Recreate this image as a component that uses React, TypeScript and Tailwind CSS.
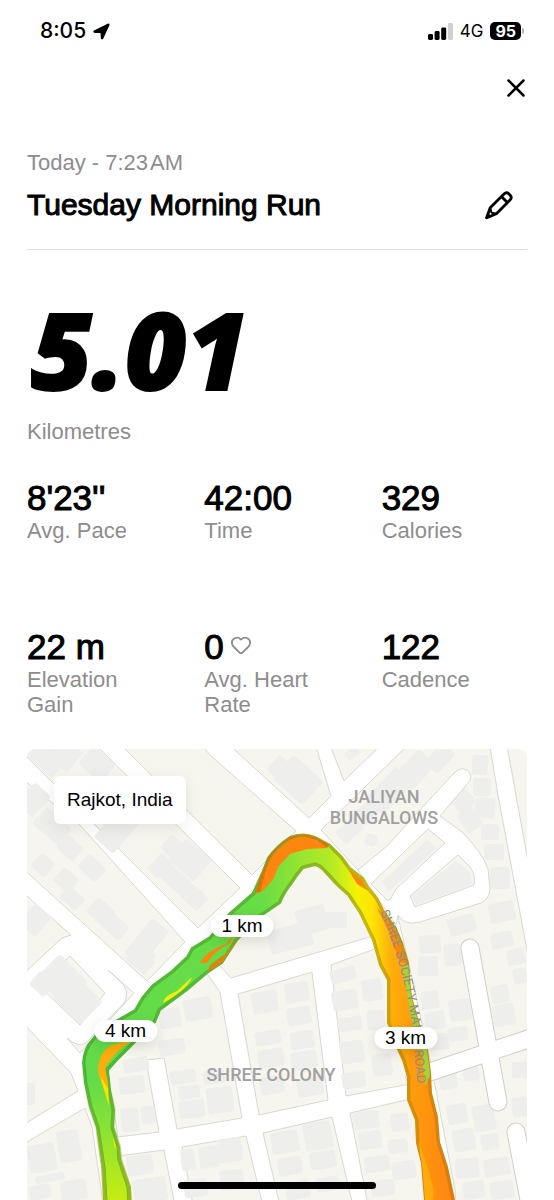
import { Heart, X } from 'lucide-react'

interface Stat {
  value: string
  label: string
  heart?: boolean
}

const stats: Stat[] = [
  { value: "8'23''", label: 'Avg. Pace' },
  { value: '42:00', label: 'Time' },
  { value: '329', label: 'Calories' },
  { value: '22 m', label: 'Elevation Gain' },
  { value: '0', label: 'Avg. Heart Rate', heart: true },
  { value: '122', label: 'Cadence' },
]

// city blocks, everything between them is road
const blocks = [
  '20,740 91,740 240,888 198,928 95,825 20,750',
  '116,740 198,740 210,755 296,831 252,875',
  '224,740 309,818 331,796 314,740',
  '328,740 344,781 386,740',
  '413,740 321,830 358,870 371,884 388,901 398,917 408,960 430,1060 455,1190 456,1210 540,1210 540,1010 527,950 498,795 489,740',
  '506,740 540,740 540,920 527,856',
  '20,777 80,825 185,942 147,981 20,866',
  '20,890 71,935 62,938 20,977',
  '70,956 105,993 80,1025 38,985',
  '20,1020 71,1073 78,1091 20,1127',
  '20,1146 85,1108 92,1127 104,1210 20,1210',
  '205,950 231,978 380,934 350,880 315,860 290,870 250,915',
  '200,970 208,975 220,992 242,1118 177,1129 164,1058 146,1060 159,1132 118,1137 105,1060 120,1030 160,985',
  '238,994 312,972 328,1100 259,1115',
  '331,965 388,944 410,1084 346,1096',
  '118,1156 164,1150 176,1210 128,1210',
  '182,1147 246,1136 264,1210 194,1210',
  '263,1133 332,1117 354,1210 281,1210',
  '350,1113 410,1099 440,1210 369,1210',
]

// cx, cy, width, height, rotation
const houses: [number, number, number, number, number][] = [
  [47, 758, 34, 24, 42], [66, 755, 24, 26, 42], [97, 764, 30, 24, 42], [122, 822, 28, 30, 42], [110, 838, 26, 20, 42],
  [174, 848, 22, 18, 42], [190, 860, 34, 28, 42], [160, 866, 16, 22, 42], [176, 880, 28, 18, 42], [194, 897, 24, 18, 42],
  [34, 800, 22, 28, 42], [52, 826, 34, 22, 42], [70, 848, 22, 18, 42], [92, 868, 24, 18, 42], [43, 865, 18, 18, 42],
  [66, 880, 20, 18, 42], [72, 898, 22, 16, 42], [101, 912, 24, 20, 42], [116, 927, 22, 18, 42], [150, 938, 34, 22, -50], [140, 954, 26, 20, 42],
  [35, 920, 22, 26, 42], [282, 770, 24, 20, 42], [298, 780, 40, 32, 42], [352, 753, 14, 10, -42],
  [390, 790, 42, 24, -46], [415, 770, 36, 24, -46], [440, 758, 28, 18, -46], [350, 830, 26, 16, -42], [371, 840, 12, 12, 20],
  [372, 808, 34, 18, -44], [480, 765, 16, 20, 3], [482, 787, 18, 18, 3], [485, 808, 20, 20, 4], [462, 800, 22, 20, 45], [470, 820, 18, 22, -35],
  [490, 832, 18, 16, 0], [494, 852, 20, 16, 0], [500, 878, 20, 22, 0], [502, 912, 26, 20, -12], [462, 925, 28, 18, -15], [430, 944, 22, 18, -5],
  [502, 940, 22, 16, -12], [453, 955, 18, 22, -5], [516, 957, 18, 16, -12], [428, 966, 20, 20, 0],
  [290, 938, 44, 24, -14], [312, 920, 30, 26, -14], [336, 920, 22, 16, 0],
  [42, 984, 20, 18, 42], [62, 980, 40, 34, 45], [78, 1000, 38, 32, 45], [140, 960, 26, 18, 42],
  [170, 1018, 22, 20, -10], [198, 1009, 28, 22, -10], [172, 1047, 26, 16, -10], [136, 1065, 26, 14, -10], [132, 1085, 26, 18, -8],
  [183, 1077, 26, 14, -8], [189, 1092, 22, 14, -8], [192, 1109, 26, 18, -8], [220, 1100, 26, 26, -8], [214, 1077, 22, 14, -8],
  [130, 1120, 18, 24, -5], [148, 1115, 14, 18, -5], [28, 1094, 14, 22, 0],
  [42, 1158, 28, 28, -10], [69, 1146, 22, 32, -10], [50, 1178, 30, 8, -10], [40, 1192, 22, 14, -10], [74, 1190, 26, 20, -8],
  [265, 1002, 26, 22, -10], [297, 992, 24, 20, -10], [268, 1038, 26, 14, -10], [299, 1016, 24, 18, -10], [271, 1058, 26, 18, -10],
  [302, 1040, 24, 18, -10], [272, 1085, 24, 18, -10], [304, 1060, 26, 18, -10], [310, 1087, 26, 18, -10],
  [343, 975, 26, 14, -14], [345, 1000, 26, 20, -10], [372, 990, 20, 22, -10], [350, 1024, 24, 14, -8], [352, 1052, 24, 22, -8], [376, 1020, 18, 20, -8],
  [354, 1080, 24, 16, -8], [382, 1065, 20, 22, -8], [430, 1000, 18, 18, -5], [435, 1020, 20, 18, -8], [460, 1010, 22, 22, -8], [438, 1042, 22, 16, -8],
  [458, 1034, 20, 14, -8], [500, 994, 18, 18, -10], [504, 1015, 22, 22, -10], [520, 976, 14, 16, -10],
  [140, 1165, 26, 20, -8], [150, 1190, 34, 24, -8], [188, 1160, 14, 22, -8], [209, 1157, 20, 22, -8], [230, 1150, 24, 24, -8], [196, 1188, 24, 18, -8], [232, 1180, 24, 20, -8],
  [285, 1142, 28, 22, -10], [318, 1136, 28, 28, -10], [290, 1166, 24, 18, -10], [323, 1160, 26, 18, -10], [298, 1190, 24, 18, -10], [328, 1184, 24, 14, -10],
  [366, 1120, 26, 18, -8], [400, 1122, 18, 18, -8], [370, 1140, 24, 18, -8], [398, 1146, 20, 14, -8], [377, 1164, 26, 16, -8], [404, 1170, 24, 18, -8], [383, 1188, 24, 16, -8],
  [448, 1078, 18, 22, -10], [471, 1072, 16, 18, -10], [457, 1114, 20, 20, -10], [484, 1118, 22, 26, -10], [464, 1140, 22, 22, -10], [490, 1142, 18, 16, -10],
  [467, 1168, 24, 20, -5], [497, 1167, 26, 18, -10], [474, 1190, 22, 18, -8], [502, 1190, 24, 18, -8], [520, 1107, 16, 20, -8], [520, 1070, 16, 16, 0],
]

const routeOutline =
  'M105,1206 L105,1200 103,1167 100,1147 97,1127 90,1107 85,1083 83,1063 Q84,1048 92,1040 L100,1030 135,1010 142,998 153,985 172,971 187,957 192,948 210,937 230,913 253,893 262,873 268,858 Q276,846 290,837 Q303,832 315,837 L330,845 342,857 350,868 363,878 368,887 377,898 383,910 395,927 402,943 408,963 409,977 411,997 417,1018 427,1050 430,1073 431,1093 437,1117 439,1142 447,1167 454,1200 456,1206 425,1206 425,1200 422,1163 417,1143 416,1120 408,1100 408,1077 403,1060 397,1047 388,1023 388,980 380,965 373,940 360,913 348,895 337,885 325,872 Q320,866 315,865 L303,868 Q296,876 292,883 Q284,893 280,903 L258,918 237,940 222,963 207,973 187,990 160,1010 155,1022 137,1040 117,1060 108,1070 110,1090 114,1110 113,1127 119,1147 120,1160 129,1187 130,1206 Z'

const markers = [
  { label: '1 km', place: 'left-[43%] top-[39.2%]' },
  { label: '4 km', place: 'left-[19.7%] top-[62.5%]' },
  { label: '3 km', place: 'left-[75.7%] top-[64%]' },
]

function RunMap() {
  return (
    <svg viewBox="27 749 500 451" className="block w-full" aria-label="Route map">
      <defs>
        <linearGradient id="pace" gradientUnits="userSpaceOnUse" x1="80" y1="0" x2="460" y2="0">
          <stop offset="0" stopColor="#62db4b" />
          <stop offset="0.48" stopColor="#67dd46" />
          <stop offset="0.58" stopColor="#98e52f" />
          <stop offset="0.66" stopColor="#b4ea25" />
          <stop offset="0.73" stopColor="#f4f205" />
          <stop offset="0.77" stopColor="#ffe305" />
          <stop offset="0.82" stopColor="#ffae0a" />
          <stop offset="0.89" stopColor="#ff980c" />
          <stop offset="1" stopColor="#ff8214" />
        </linearGradient>
        <linearGradient id="edge" gradientUnits="userSpaceOnUse" x1="80" y1="0" x2="460" y2="0">
          <stop offset="0" stopColor="#4eb437" />
          <stop offset="0.5" stopColor="#58b834" />
          <stop offset="0.6" stopColor="#86b622" />
          <stop offset="0.66" stopColor="#97b41c" />
          <stop offset="0.76" stopColor="#c7b60c" />
          <stop offset="0.84" stopColor="#d29408" />
          <stop offset="1" stopColor="#d8780e" />
        </linearGradient>
        <linearGradient id="start" gradientUnits="userSpaceOnUse" x1="0" y1="1080" x2="0" y2="1200">
          <stop offset="0" stopColor="#c6ec12" stopOpacity="0" />
          <stop offset="1" stopColor="#c6ec12" />
        </linearGradient>
        <linearGradient id="startEdge" gradientUnits="userSpaceOnUse" x1="0" y1="1080" x2="0" y2="1200">
          <stop offset="0" stopColor="#9cb81c" stopOpacity="0" />
          <stop offset="1" stopColor="#9cb81c" />
        </linearGradient>
        <clipPath id="route">
          <path d={routeOutline} />
        </clipPath>
        <clipPath id="startArea">
          <rect x="80" y="1080" width="60" height="125" />
        </clipPath>
      </defs>

      <rect x="27" y="749" width="500" height="451" fill="#fff" />
      <g fill="#f6f6ee" stroke="#cfcfca" strokeWidth="0.8">
        {blocks.map((points) => (
          <polygon key={points} points={points} />
        ))}
        <path d="M108,970 L134,993 80,1053 67,1038 Q78,1048 86,1043 L124,1003 Q129,995 124,985 Z" />
      </g>

      <g fill="#eeeeed">
        {houses.map(([x, y, w, h, turn], i) => (
          <rect key={i} x={x - w / 2} y={y - h / 2} width={w} height={h} rx="3" transform={`rotate(${turn} ${x} ${y})`} />
        ))}
      </g>

      {/* roads that cut through the eastern block */}
      <path
        d="M358,870 L387,846 454,773 Q462,765 469,772 Q473,777 468,783 L440,816 462,832 Q482,852 488,869 L490,889 Q489,899 481,903 L420,922 Q404,926 398,915 L396,925 Z"
        fill="#fff"
        stroke="#cfcfca"
        strokeWidth="0.8"
      />
      <g fill="#f6f6ee" stroke="#cfcfca" strokeWidth="0.8">
        <path d="M428,829 L445,843 396,889 390,900 387,900 371,884 Z" />
        <path d="M458,855 L470,867 Q476,875 474,885 L415,907 410,896 Z" />
      </g>
      <g fill="#eeeeed">
        <path d="M427,840 l10,8 -48,43 -7,-9 Z" />
        <path d="M456,861 l14,11 2,12 -56,21 -4,-9 Z" />
      </g>
      <g fill="none" strokeLinecap="round">
        <path d="M470,948 L498,1102 M516,1132 L531,1210" stroke="#cfcfca" strokeWidth="19" />
        <path d="M415,1077 L540,1035" stroke="#cfcfca" strokeWidth="19" />
        <path d="M415,1077 L540,1035" stroke="#fff" strokeWidth="17" />
        <path d="M470,948 L498,1102 M516,1132 L531,1210" stroke="#fff" strokeWidth="17" />
      </g>

      <g fontFamily="Roboto, sans-serif" fontWeight="500" fontSize="18" textAnchor="middle" fill="#a0a0a0">
        <text x="384" y="803">JALIYAN</text>
        <text x="384" y="824">BUNGALOWS</text>
        <text x="271" y="1081">SHREE COLONY</text>
      </g>

      <path d={routeOutline} fill="url(#edge)" stroke="url(#edge)" strokeWidth="2" strokeLinejoin="round" />
      <g clipPath="url(#route)">
        <path d={routeOutline} fill="url(#pace)" />
        <rect x="80" y="1080" width="60" height="125" fill="url(#start)" />
        <g fill="#ff860e">
          <path d="M250,897 L262,873 268,858 280,843 300,830 318,836 328,848 307,849 290,854 278,867 274,878 264,890 Z" />
          <path d="M348,869 L364,880 370,892 357,884 Z" />
          <path d="M377,908 L395,925 412,965 400,962 388,930 Z" />
        </g>
        <path d={routeOutline} fill="none" stroke="url(#edge)" strokeWidth="5" strokeLinejoin="round" />
        <path d="M258,892 L266,862 Q280,836 303,834 L318,838 328,846" fill="none" stroke="#d9720b" strokeWidth="4" />
        <path d="M200,963 Q206,951 226,944 L234,934 230,943 Q214,951 207,963 Z" fill="#ff860e" />
        <path d="M210,965 L226,953 238,937 239,942 224,962 208,972 Z" fill="#d9860f" />
        <path d="M112,1045 Q98,1052 98,1072 L109,1106 108,1082 105,1068 Q112,1054 132,1040 Z" fill="#ffad0b" />
        <path d="M100,1076 L109,1106 108,1088 Z M113,1136 l4,14 -3,-4 Z" fill="#f3e600" />
        <path d="M163,1003 Q164,996 177,991 L192,977 Q187,990 163,1003 Z" fill="#f3ee0c" />
        <path d="M402,965 L410,965 411,997 418,1018 428,1050 430,1075 425,1086 422,1055 411,1018 Z" fill="#a6d438" />
        <path d="M419,1140 L434,1190 432,1206 423,1206 Z" fill="#ffab0b" />
      </g>
      <g clipPath="url(#startArea)">
        <path d={routeOutline} fill="none" stroke="url(#startEdge)" strokeWidth="4" />
      </g>

      <path id="road" d="M380,912 Q403,965 413,1030 L416,1060" fill="none" />
      <path id="roadEnd" d="M414,1050 L418,1095" fill="none" />
      <g fontFamily="Roboto, sans-serif" fontSize="13" fill="#8d9080">
        <text>
          <textPath href="#road">SHREE SOCIETY MAIN</textPath>
        </text>
        <text>
          <textPath href="#roadEnd">ROAD</textPath>
        </text>
      </g>
    </svg>
  )
}

function StatusBar() {
  return (
    <div className="flex h-[62px] items-center justify-between pl-10 pr-[30px] font-['Inter',sans-serif]">
      <div className="flex items-center gap-[7px]">
        <span className="text-[21px] font-medium leading-6">8:05</span>
        <svg viewBox="0 0 18 18" className="size-[17px]">
          <path
            d="M1.4 8.6 L15.8 1.4 Q17.2 0.9 16.7 2.2 L10.3 16 Q9.4 17.4 9 16 L8.6 9.9 L2 9.8 Q0.4 9.4 1.4 8.6 Z"
            stroke="#000"
            strokeWidth="1.4"
            strokeLinejoin="round"
          />
        </svg>
      </div>
      <div className="flex items-center gap-[7px]">
        <svg viewBox="0 0 25 17" className="h-[17px] w-[25px]">
          <rect x="0" y="11" width="5" height="6" rx="1.4" />
          <rect x="6.6" y="8" width="5" height="9" rx="1.4" />
          <rect x="13.2" y="4.5" width="5" height="12.5" rx="1.4" />
          <rect x="20" y="0" width="5" height="17" rx="1.4" fill="#d0d0d0" />
        </svg>
        <span className="text-[17px] leading-6">4G</span>
        <div className="flex items-center gap-px">
          <span className="rounded-[5px] bg-black px-[5px] text-[16px] font-bold leading-[18px] text-white">95</span>
          <span className="h-[6px] w-[2px] rounded-r-full bg-[#b5b5b5]" />
        </div>
      </div>
    </div>
  )
}

export default function App() {
  return (
    <div className="relative min-h-screen overflow-hidden bg-white font-['Liberation_Sans',Arial,sans-serif] text-black">
      <StatusBar />

      <main className="px-[27px]">
        <div className="flex h-[52px] items-center justify-end">
          <button type="button" aria-label="Close" className="-mr-1">
            <X size={30} strokeWidth={2} />
          </button>
        </div>

        <header className="mt-[35px] border-b border-[#dedede] pb-[26px]">
          <p className="text-[22px] leading-7 text-[#8d8d8d]">
            Today - 7:23<span className="ml-[2px]">AM</span>
          </p>
          <div className="mt-[10px] flex h-9 items-center justify-between">
            <h1 className="text-[30px] leading-9 [-webkit-text-stroke:1px_black]">Tuesday Morning Run</h1>
            <button type="button" aria-label="Edit name" className="mr-[14px]">
              <svg viewBox="0 0 28 29" className="h-[29px] w-[28px]" fill="none" stroke="#000" strokeWidth="2.8" strokeLinejoin="round">
                <path d="M1.6 26.8 L5.2 16.8 L19 3 Q21.4 0.6 23.8 2.8 L25.2 4.2 Q27.4 6.6 25 9 L11.4 22.8 Z" />
                <path d="M16.4 5.6 L22.4 11.6" />
                <path d="M5.2 16.8 L6.4 21.6 L11.4 22.8" strokeWidth="2" />
                <path d="M1.6 26.8 L2.8 23.2 L5.2 25.4 Z" fill="#000" strokeWidth="2" />
              </svg>
            </button>
          </div>
        </header>

        <section className="mt-[59px]">
          <p className="pl-1 font-['Open_Sans',sans-serif] text-[106px] font-extrabold italic leading-[80px] [-webkit-text-stroke:2px_black]">
            5.01
          </p>
          <p className="mt-[31px] text-[22px] leading-6 text-[#8d8d8d]">Kilometres</p>
        </section>

        <dl className="mt-[33px] grid grid-cols-3 gap-x-8 gap-y-[57px]">
          {stats.map((stat) => (
            <div key={stat.label} className="flex min-h-[92px] flex-col">
              <dt className="order-2 max-w-[120px] text-[22px] leading-[25px] text-[#8d8d8d]">{stat.label}</dt>
              <dd className="flex items-center gap-[6px] text-[35px] leading-[41px] [-webkit-text-stroke:1px_black]">
                {stat.value}
                {stat.heart && <Heart size={22} strokeWidth={2} className="mb-1 text-[#8d8d8d]" />}
              </dd>
            </div>
          ))}
        </dl>

        <section className="relative mt-[31px] overflow-hidden rounded-t-lg">
          <RunMap />
          <p className="absolute left-[27px] top-[27px] rounded-md bg-white px-[13px] py-3 text-[19px] leading-6 shadow-[0_4px_16px_rgba(0,0,0,0.08)]">
            Rajkot, India
          </p>
          {markers.map((marker) => (
            <span
              key={marker.label}
              className={`absolute -translate-x-1/2 -translate-y-1/2 rounded-full bg-white px-[11px] text-[19px] leading-[22px] whitespace-nowrap shadow-[0_4px_14px_rgba(0,0,0,0.12)] ${marker.place}`}
            >
              {marker.label}
            </span>
          ))}
        </section>
      </main>

      <div className="fixed bottom-[11px] left-1/2 h-[7px] w-[198px] -translate-x-1/2 rounded-full bg-black" />
    </div>
  )
}
